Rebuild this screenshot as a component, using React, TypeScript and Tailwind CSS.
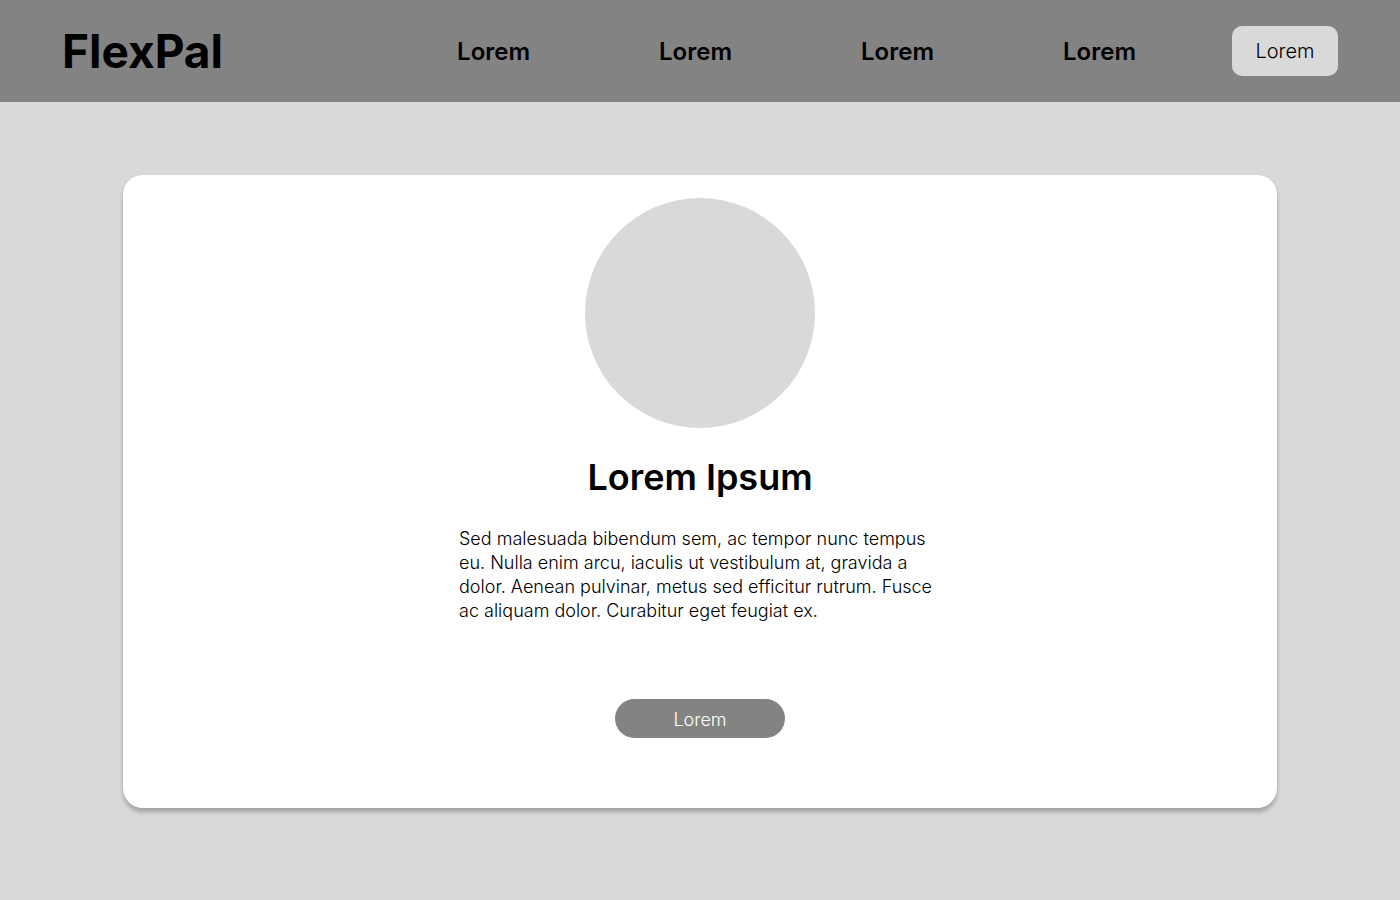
const links = [
  { id: "first", label: "Lorem" },
  { id: "second", label: "Lorem" },
  { id: "third", label: "Lorem" },
  { id: "fourth", label: "Lorem" },
];

function Header() {
  return (
    <header className="flex items-center bg-[#838383] px-[62px] py-[26px]">
      <a href="#" className="text-[46px] leading-[48px] font-bold">
        FlexPal
      </a>
      <nav className="mr-24 ml-auto flex items-center gap-[129px] pt-0.5">
        {links.map((link) => (
          <a key={link.id} href={`#${link.id}`} className="text-2xl leading-8 font-semibold">
            {link.label}
          </a>
        ))}
      </nav>
      <button type="button" className="h-[50px] w-[106px] rounded-[10px] bg-[#d9d9d9] text-xl font-light">
        Lorem
      </button>
    </header>
  );
}

function ProfileCard() {
  return (
    <section className="flex w-full max-w-[1154px] flex-col items-center rounded-[20px] bg-white pt-[23px] pb-[70px] shadow-[0_4px_4px_rgba(0,0,0,0.25)]">
      <div className="size-[230px] rounded-full bg-[#d9d9d9]" />
      <h1 className="mt-6 text-4xl leading-[50px] font-semibold">Lorem Ipsum</h1>
      <p className="mt-[25px] w-[482px] text-lg leading-6 font-light">
        Sed malesuada bibendum sem, ac tempor nunc tempus eu. Nulla enim arcu, iaculis ut vestibulum at, gravida a
        dolor. Aenean pulvinar, metus sed efficitur rutrum. Fusce ac aliquam dolor. Curabitur eget feugiat ex.
      </p>
      <button type="button" className="mt-[76px] h-[39px] w-[170px] rounded-full bg-[#838383] pt-0.5 text-lg font-light text-white">
        Lorem
      </button>
    </section>
  );
}

export default function App() {
  return (
    <div className="flex min-h-screen flex-col bg-[#d9d9d9] font-[Inter,sans-serif] text-black">
      <Header />
      <main className="flex justify-center px-12 py-[73px]">
        <ProfileCard />
      </main>
    </div>
  );
}
